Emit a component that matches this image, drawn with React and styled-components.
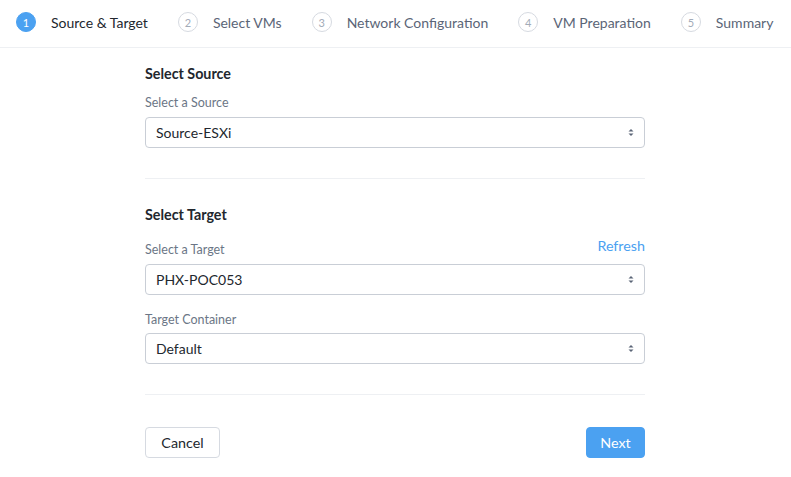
import React, { useState } from "react";
import styled, { createGlobalStyle } from "styled-components";

const GlobalStyle = createGlobalStyle`
  html, body {
    margin: 0;
    padding: 0;
    background: #fff;
    font-family: Lato, "Open Sans", sans-serif;
    -webkit-font-smoothing: antialiased;
  }
`;

const Steps = styled.div`
  display: flex;
  align-items: center;
  gap: 30px;
  height: 44px;
  padding: 0 0 3px 16px;
  border-bottom: 1px solid #eef0f3;
  white-space: nowrap;
  overflow: hidden;
`;

const Step = styled.div`
  display: flex;
  align-items: center;
  gap: 15px;
  font-size: 14px;
  color: ${(p) => (p.active ? "#22272e" : "#5b6577")};
`;

const StepNum = styled.span`
  box-sizing: border-box;
  width: 20px;
  height: 20px;
  border-radius: 50%;
  display: flex;
  align-items: center;
  justify-content: center;
  font-size: 11px;
  color: ${(p) => (p.active ? "#fff" : "#a3abb8")};
  background: ${(p) => (p.active ? "#4ba1f1" : "#fff")};
  border: 1px solid ${(p) => (p.active ? "#4ba1f1" : "#d6dae1")};
`;

const Body = styled.div`
  box-sizing: border-box;
  width: 501px;
  padding-right: 1px;
  margin: 0 auto;
`;

const Section = styled.section`
  padding: ${(p) => p.top}px 0 30px;
  border-bottom: 1px solid #eef0f3;
`;

const SectionTitle = styled.h3`
  margin: 0 0 12px;
  font-size: 14.3px;
  font-weight: 700;
  color: #22272e;
  line-height: 18px;
`;

const Field = styled.div`
  margin-top: ${(p) => p.gap || 0}px;
`;

const LabelRow = styled.div`
  display: flex;
  justify-content: space-between;
  align-items: flex-end;
  margin-bottom: ${(p) => p.space ?? 6}px;
`;

const Label = styled.label`
  font-size: 12.5px;
  color: #6b7686;
  line-height: 16px;
`;

const LinkButton = styled.a`
  font-size: 14.3px;
  color: #4ba1f1;
  cursor: pointer;
  line-height: 18px;
  margin-bottom: 3px;
`;

const SelectBox = styled.div`
  box-sizing: border-box;
  height: 31px;
  border: 1px solid #c9ced6;
  border-radius: 4px;
  display: flex;
  align-items: center;
  justify-content: space-between;
  padding: 0 10px;
  font-size: 14px;
  color: #22272e;
  cursor: pointer;
`;

const Footer = styled.div`
  display: flex;
  justify-content: space-between;
  padding-top: 32px;
`;

const Button = styled.button`
  box-sizing: border-box;
  height: 31px;
  padding: 0 12px;
  border-radius: 4px;
  font-family: inherit;
  font-size: 14.3px;
  cursor: pointer;
  border: 1px solid ${(p) => (p.primary ? "#4ba1f1" : "#d6dae1")};
  background: ${(p) => (p.primary ? "#4ba1f1" : "#fff")};
  color: ${(p) => (p.primary ? "#fff" : "#22272e")};
  min-width: ${(p) => (p.primary ? 59 : 75)}px;
`;

const Updown = () => (
  <svg width="6" height="9" viewBox="0 0 6 9">
    <path d="M0.5 3.5L3 1L5.5 3.5Z" fill="#5b6577" />
    <path d="M0.5 5.5L3 8L5.5 5.5Z" fill="#5b6577" />
  </svg>
);

const Select = ({ value }) => (
  <SelectBox>
    <span>{value}</span>
    <Updown />
  </SelectBox>
);

const steps = [
  "Source & Target",
  "Select VMs",
  "Network Configuration",
  "VM Preparation",
  "Summary",
];

const App = () => {
  const [current] = useState(0);

  return (
    <>
      <GlobalStyle />
      <Steps>
        {steps.map((s, i) => (
          <Step key={s} active={i === current}>
            <StepNum active={i === current}>{i + 1}</StepNum>
            {s}
          </Step>
        ))}
      </Steps>
      <Body>
        <Section top={17}>
          <SectionTitle>Select Source</SectionTitle>
          <Field>
            <LabelRow>
              <Label>Select a Source</Label>
            </LabelRow>
            <Select value="Source-ESXi" />
          </Field>
        </Section>
        <Section top={27}>
          <SectionTitle>Select Target</SectionTitle>
          <Field gap={13}>
            <LabelRow>
              <Label>Select a Target</Label>
              <LinkButton>Refresh</LinkButton>
            </LabelRow>
            <Select value="PHX-POC053" />
          </Field>
          <Field gap={17}>
            <LabelRow space={5}>
              <Label>Target Container</Label>
            </LabelRow>
            <Select value="Default" />
          </Field>
        </Section>
        <Footer>
          <Button>Cancel</Button>
          <Button primary>Next</Button>
        </Footer>
      </Body>
    </>
  );
};

export default App;
